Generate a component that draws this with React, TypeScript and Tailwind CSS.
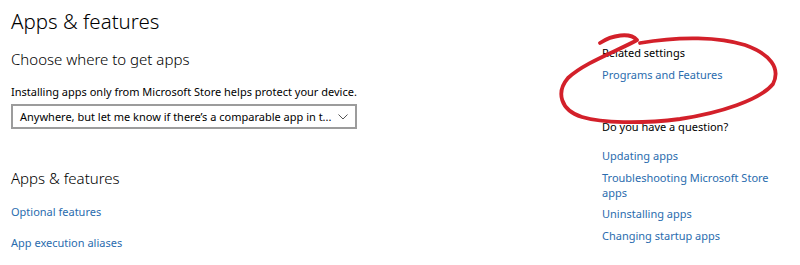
import React from "react";

const font = { fontFamily: '"Noto Sans", "Open Sans", sans-serif' };

function Link({ children, className = "" }: { children: React.ReactNode; className?: string }) {
    return <a className={"block text-[#2a6cae] " + className}>{children}</a>;
}

export default function App() {
    return (
        <div className="relative w-[800px] h-[265px] overflow-hidden bg-white text-black" style={font}>
            <div className="flex">
                {/* left column */}
                <div className="w-[602px] pl-[11px] pt-[7px]">
                    <h1 className="text-[20.5px] leading-[28px] font-light">Apps &amp; features</h1>
                    <h2 className="mt-[14px] text-[15px] leading-[20px] font-light">Choose where to get apps</h2>
                    <p className="mt-[15px] text-[11px] leading-[16px]">
                        Installing apps only from Microsoft Store helps protect your device.
                    </p>
                    <div className="mt-[4px] flex h-[25px] w-[346px] items-center justify-between border-2 border-[#9c9c9c] pl-[7px] pr-[7px]">
                        <span className="whitespace-nowrap text-[11px] leading-[21px]">
                            Anywhere, but let me know if there’s a comparable app in t...
                        </span>
                        <svg width="10" height="6" viewBox="0 0 10 6" fill="none" stroke="#555" strokeWidth="1">
                            <path d="M0.5 0.5 L5 5 L9.5 0.5" />
                        </svg>
                    </div>
                    <h2 className="mt-[39px] text-[15px] leading-[20px] font-light">Apps &amp; features</h2>
                    <Link className="mt-[16px] text-[11px] leading-[16px]">Optional features</Link>
                    <Link className="mt-[15px] text-[11px] leading-[16px]">App execution aliases</Link>
                </div>

                {/* right column */}
                <div className="w-[178px] pt-[45px] text-[11px]">
                    <div className="leading-[16px]">Related settings</div>
                    <Link className="mt-[6px] leading-[16px]">Programs and Features</Link>
                    <div className="mt-[36px] leading-[16px]">Do you have a question?</div>
                    <div className="mt-[13px] flex flex-col gap-[7px] leading-[15px]">
                        <Link>Updating apps</Link>
                        <Link>Troubleshooting Microsoft Store apps</Link>
                        <Link className="-mt-[1px]">Uninstalling apps</Link>
                        <Link>Changing startup apps</Link>
                    </div>
                </div>
            </div>

            {/* red hand-drawn circle annotation */}
            <svg className="pointer-events-none absolute left-0 top-0" width="800" height="265" viewBox="0 0 800 265" fill="none">
                <path
                    d="M600 43 C612 35, 630 32, 637 40 C620 50, 585 62, 568 78 C556 92, 560 110, 582 117 C602 123, 640 124, 680 119 C720 113, 760 100, 773 84 C781 68, 770 54, 745 45 C720 37, 680 36, 640 43"
                    stroke="#d3202a"
                    strokeWidth="3.8"
                    strokeLinecap="round"
                    strokeLinejoin="round"
                />
            </svg>
        </div>
    );
}
